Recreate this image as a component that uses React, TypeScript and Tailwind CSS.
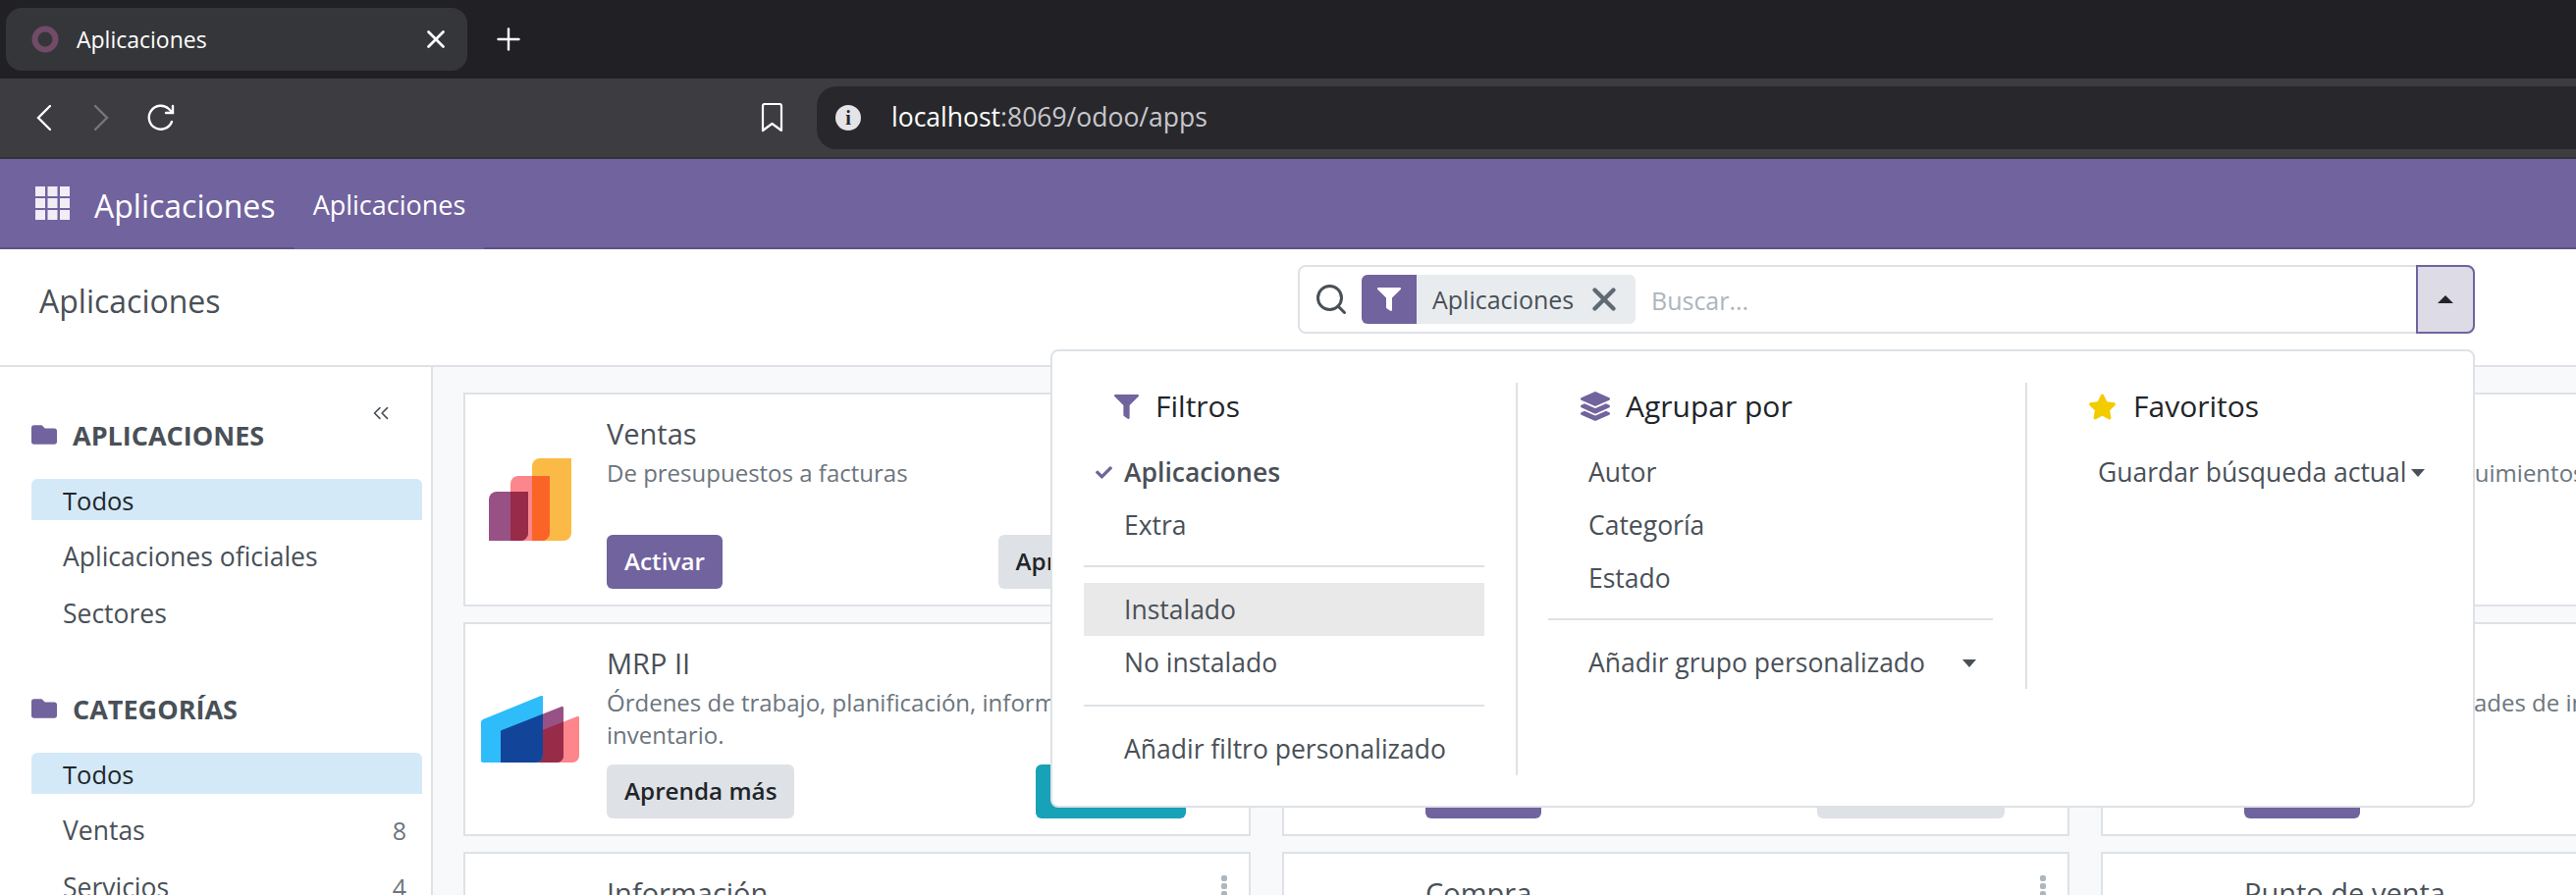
import React from 'react';
import { FaCheck, FaFilter, FaFolder, FaLayerGroup, FaStar } from 'react-icons/fa';
import { ChevronsLeft, Plus, Search, X } from 'lucide-react';

type Card = {
  title: string;
  desc: string;
  left: string;
  right?: string;
  tone?: 'teal' | 'gray';
  logo?: 'ventas' | 'mrp';
};

const cards: Card[] = [
  { title: 'Ventas', desc: 'De presupuestos a facturas', left: 'Activar', right: 'Aprenda más', logo: 'ventas' },
  { title: 'Facturación', desc: 'Facturas y pagos', left: 'Activar', right: 'Aprenda más' },
  { title: 'CRM', desc: 'Facturas, cobro y seguimientos', left: 'Activar', right: 'Aprenda más' },
  {
    title: 'MRP II',
    desc: 'Órdenes de trabajo, planificación, informes de inventario.',
    left: 'Aprenda más',
    right: 'Actualizar',
    tone: 'teal',
    logo: 'mrp',
  },
  { title: 'Inventario', desc: 'Gestione su inventario', left: 'Activar', right: 'Aprenda más' },
  { title: 'Contabilidad', desc: 'Supervisar las actividades de inventario', left: 'Activar', right: 'Aprenda más' },
  { title: 'Información', desc: '', left: 'Activar' },
  { title: 'Compra', desc: '', left: 'Activar' },
  { title: 'Punto de venta', desc: '', left: 'Activar' },
];

const VentasLogo = () => (
  <svg width="84" height="84" viewBox="0 0 84 84">
    <path d="M44 8a8 8 0 0 1 8-8h32v76a8 8 0 0 1-8 8H44z" fill="#fbb945" />
    <path d="M22 26a8 8 0 0 1 8-8h32v58a8 8 0 0 1-8 8H22z" fill="#fc868b" />
    <path d="M44 18h18v58a8 8 0 0 1-8 8H44z" fill="#fa6427" />
    <path d="M0 42a8 8 0 0 1 8-8h32v42a8 8 0 0 1-8 8H0z" fill="#985184" />
    <path d="M22 34h18v42a8 8 0 0 1-8 8H22z" fill="#982b48" />
  </svg>
);

const MrpLogo = () => (
  <svg width="100" height="68" viewBox="0 0 100 68">
    <path d="M40 44 98 21q2-1 2 2v38a7 7 0 0 1-7 7H40z" fill="#fc868b" />
    <path d="M20 35.6 82 11q2-1 2 2v48a7 7 0 0 1-7 7H20z" fill="#985184" />
    <path d="M40 44 84 26.4V61a7 7 0 0 1-7 7H40z" fill="#982b48" />
    <path d="M0 27q0-2 2-3L61 0q2-1 2 2v59a7 7 0 0 1-7 7H2q-2 0-2-2z" fill="#2ebcfa" />
    <path d="M20 35.6 63 18.4V61a7 7 0 0 1-7 7H20z" fill="#124599" />
  </svg>
);

const AppCard = ({ card }: { card: Card }) => (
  <div className="relative flex h-[218px] border-2 border-[#dee2e6] bg-white">
    <div className="flex w-[132px] shrink-0 items-center justify-center">
      {card.logo === 'ventas' && <VentasLogo />}
      {card.logo === 'mrp' && <MrpLogo />}
    </div>
    <div className="ml-3 flex min-w-0 flex-1 flex-col pb-4 pr-16 pt-[23px]">
      <div className="text-[29px] font-medium leading-[33px] text-[#495057]">{card.title}</div>
      <p className="mt-[7px] text-[24px] leading-[33px] text-[#6c757d]">{card.desc}</p>
      <div className="mt-auto flex justify-between">
        <button
          className={`h-[55px] rounded-md px-[18px] text-[24.250px] font-semibold ${card.left === 'Activar' ? 'bg-[#71639e] text-white' : 'bg-[#dee2e6] text-[#212529]'}`}
        >
          {card.left}
        </button>
        {card.right && (
          <button
            className={`h-[55px] rounded-md px-[18px] text-[24.250px] font-semibold ${card.tone === 'teal' ? 'w-[153px] bg-[#17a2b8] text-white' : 'bg-[#dee2e6] text-[#212529]'}`}
          >
            {card.right}
          </button>
        )}
      </div>
    </div>
    <div className="absolute right-[22px] top-[22px] flex flex-col gap-[2px]">
      <span className="h-[6px] w-[6px] rounded-[2px] bg-[#adb5bd]" />
      <span className="h-[6px] w-[6px] rounded-[2px] bg-[#adb5bd]" />
      <span className="h-[6px] w-[6px] rounded-[2px] bg-[#adb5bd]" />
    </div>
  </div>
);

const SideHeader = ({ label }: { label: string }) => (
  <div className="flex h-[42px] items-center gap-4 text-[#71639e]">
    <FaFolder className="h-[26px] w-[26px]" />
    <span className="pt-[2px] text-[27px] font-bold text-[#495057]">{label}</span>
  </div>
);

const SideRow = ({ label, count, active }: { label: string; count?: number; active?: boolean }) => (
  <div
    className={`flex h-[42px] items-center justify-between rounded-t-md pl-8 pr-4 pt-[2px] ${active ? 'bg-[#d4e9f8] text-[25.500px] font-medium text-[#212529]' : 'text-[26.500px] text-[#495057]'}`}
  >
    <span>{label}</span>
    {count !== undefined && <span className="text-[25px] text-[#6c757d]">{count}</span>}
  </div>
);

const MenuRow = ({ children, active, strong }: { children: React.ReactNode; active?: boolean; strong?: boolean }) => (
  <div
    className={`relative flex h-[54px] items-center justify-between pl-[41px] pr-[17px] pt-[2px] text-[26.500px] text-[#495057] ${active ? 'bg-[#e9e9e9]' : ''} ${strong ? 'font-semibold' : ''}`}
  >
    {children}
  </div>
);

const Caret = () => <span className="h-0 w-0 border-x-[7px] border-t-[8px] border-x-transparent border-t-[#495057]" />;

const Heading = ({ icon, label, gap }: { icon: React.ReactNode; label: string; gap: string }) => (
  <div className={`mb-4 flex h-[48px] items-center pl-[31px] text-[30px] font-medium text-[#212529] ${gap}`}>
    {icon}
    <span className="pb-[2px]">{label}</span>
  </div>
);

const SearchDropdown = () => (
  <div className="absolute left-[1070px] top-[356px] flex h-[467px] w-[1451px] items-start rounded-lg border-2 border-[#dee2e6] bg-white pt-8">
    <div className="h-[400px] w-[474px] border-r-2 border-[#dee2e6] pl-[32px] pr-[32px]">
      <Heading gap="gap-[17px]" icon={<FaFilter className="h-[25px] w-[25px] text-[#71639e]" />} label="Filtros" />
      <MenuRow strong>
        <FaCheck className="absolute left-3 top-[19px] h-[17px] w-[17px] text-[#71639e]" />
        Aplicaciones
      </MenuRow>
      <MenuRow>Extra</MenuRow>
      <div className="mb-4 mt-[14px] h-[2px] bg-[#dee2e6]" />
      <MenuRow active>Instalado</MenuRow>
      <MenuRow>No instalado</MenuRow>
      <div className="my-4 h-[2px] bg-[#dee2e6]" />
      <MenuRow>Añadir filtro personalizado</MenuRow>
    </div>
    <div className="h-[312px] w-[519px] border-r-2 border-[#dee2e6] pl-[31px] pr-[33px]">
      <div className="pl-[2px]">
        <Heading gap="gap-[16px]" icon={<FaLayerGroup className="h-[30px] w-[30px] text-[#71639e]" />} label="Agrupar por" />
      </div>
      <MenuRow>Autor</MenuRow>
      <MenuRow>Categoría</MenuRow>
      <MenuRow>Estado</MenuRow>
      <div className="mb-4 mt-[14px] h-[2px] bg-[#dee2e6]" />
      <MenuRow>
        Añadir grupo personalizado
        <Caret />
      </MenuRow>
    </div>
    <div className="flex-1 pl-[31px]">
      <Heading gap="gap-[17px]" icon={<FaStar className="h-[29px] w-[29px] text-[#f3cc00]" />} label="Favoritos" />
      <MenuRow>
        <span className="flex items-center gap-1">
          Guardar búsqueda actual
          <Caret />
        </span>
      </MenuRow>
    </div>
  </div>
);

const App: React.FC = () => {
  return (
    <div className="relative flex h-[912px] w-[2624px] flex-col overflow-hidden bg-white font-['Open_Sans',sans-serif]">
      {/* tab strip */}
      <div className="flex h-[80px] shrink-0 items-center bg-[#202025] pl-[6px]">
        <div className="flex h-16 w-[470px] items-center rounded-2xl bg-[#35363a] pl-[26px] pr-[17px] text-[23px] text-white">
          <svg width="28" height="28" viewBox="0 0 28 28" fill="none">
            <circle cx="14" cy="14" r="10.500" stroke="#714b67" strokeWidth="6" />
          </svg>
          <span className="ml-[18px] flex-1">Aplicaciones</span>
          <X className="h-[30px] w-[30px]" strokeWidth={2.2} />
        </div>
        <Plus className="ml-6 h-9 w-9 text-white" strokeWidth={1.6} />
      </div>

      {/* toolbar */}
      <div className="flex h-[82px] shrink-0 items-start border-b-2 border-[#333338] bg-[#3c3c41] pt-2">
        <div className="flex h-16 w-[832px] shrink-0 items-center pl-[37px]">
          <svg width="15" height="26" viewBox="0 0 15 26" fill="none" stroke="#ffffff" strokeWidth="2.4" strokeLinecap="round">
            <path d="M14 1 2 13l12 12" />
          </svg>
          <svg className="ml-[44px]" width="15" height="26" viewBox="0 0 15 26" fill="none" stroke="#77777b" strokeWidth="2.4" strokeLinecap="round">
            <path d="m1 1 12 12L1 25" />
          </svg>
          <svg className="ml-[38px]" width="30" height="30" viewBox="0 0 30 30" fill="none" stroke="#ffffff" strokeWidth="2.4" strokeLinecap="round">
            <path d="M26 19a12 12 0 1 1-3-13l4 4" />
            <path d="M27 3v7h-7" />
          </svg>
          <svg className="ml-auto mr-[34px]" width="23" height="30" viewBox="0 0 23 30" fill="none" stroke="#ffffff" strokeWidth="2.2" strokeLinejoin="round">
            <path d="M2 3q0-2 2-2h15q2 0 2 2v25l-9.500-7L2 28z" />
          </svg>
        </div>
        <div className="flex h-16 flex-1 items-center rounded-l-[20px] bg-[#28282c] pl-[19px] text-[26.500px]">
          <span className="flex h-[26px] w-[26px] items-center justify-center rounded-full bg-[#e3e3e8] font-['Liberation_Serif',serif] text-[20px] font-bold text-[#28282c]">
            i
          </span>
          <span className="ml-[31px] text-white">localhost</span>
          <span className="text-[#c7c7cc]">:8069/odoo/apps</span>
        </div>
      </div>

      {/* odoo navbar */}
      <div className="flex h-[92px] shrink-0 bg-[#71639e] text-white">
        <div className="flex w-[300px] items-center border-b-2 border-[#5f5285] pl-9">
          <svg width="35" height="34" viewBox="0 0 35 34" fill="#f1edf6">
            <rect x="0" y="0" width="10" height="10" />
            <rect x="12.500" y="0" width="10" height="10" />
            <rect x="25" y="0" width="10" height="10" />
            <rect x="0" y="12" width="10" height="10" />
            <rect x="12.500" y="12" width="10" height="10" />
            <rect x="25" y="12" width="10" height="10" />
            <rect x="0" y="24" width="10" height="10" />
            <rect x="12.500" y="24" width="10" height="10" />
            <rect x="25" y="24" width="10" height="10" />
          </svg>
          <span className="ml-[25px] pt-[5px] text-[32px]">Aplicaciones</span>
        </div>
        <div className="flex w-[193px] items-center justify-center pt-[3px] text-[27px]">Aplicaciones</div>
        <div className="flex-1 border-b-2 border-[#5f5285]" />
      </div>

      {/* control panel */}
      <div className="flex h-[120px] shrink-0 items-start border-b-2 border-[#dee2e6] pl-10 pt-4">
        <div className="flex h-[70px] w-[1282px] items-center pt-[3px] text-[32px] text-[#495057]">Aplicaciones</div>
        <div className="flex h-[70px] w-[1199px] items-stretch rounded-lg border-2 border-[#dee2e6]">
          <div className="flex flex-1 items-center pl-[14px]">
            <Search className="h-9 w-9 text-[#495057]" strokeWidth={2} />
            <div className="ml-[13px] flex h-[50px] w-[279px] items-center rounded-md bg-[#e9ecef]">
              <span className="flex h-full w-[56px] items-center justify-center rounded-l-md bg-[#71639e]">
                <FaFilter className="h-[24px] w-[24px] text-white" />
              </span>
              <span className="ml-4 flex-1 pt-[2px] text-[25px] text-[#495057]">Aplicaciones</span>
              <X className="mr-[13px] h-[38px] w-[38px] text-[#5f6a72]" strokeWidth={2.8} />
            </div>
            <span className="ml-4 pt-[3px] text-[25px] text-[#adb5bd]">Buscar...</span>
          </div>
          <div className="-m-[2px] flex w-[60px] items-center justify-center rounded-r-lg border-2 border-[#71639e] bg-[#dddbe6]">
            <span className="h-0 w-0 border-x-[8px] border-b-[8px] border-x-transparent border-b-[#212529]" />
          </div>
        </div>
      </div>

      <div className="flex min-h-0 flex-1">
        <aside className="w-[441px] shrink-0 overflow-hidden border-r-2 border-[#dee2e6] bg-white pl-8 pr-[9px] pt-[48px]">
          <div className="relative">
            <ChevronsLeft className="absolute left-[343px] top-[-14px] h-[26px] w-[26px] text-[#495057]" strokeWidth={1.5} />
            <SideHeader label="APLICACIONES" />
          </div>
          <div className="mt-6 flex flex-col gap-4">
            <SideRow label="Todos" active />
            <SideRow label="Aplicaciones oficiales" />
            <SideRow label="Sectores" />
          </div>
          <div className="mt-[55px]">
            <SideHeader label="CATEGORÍAS" />
          </div>
          <div className="mt-6 flex flex-col gap-4">
            <SideRow label="Todos" active />
            <SideRow label="Ventas" count={8} />
            <SideRow label="Servicios" count={4} />
          </div>
        </aside>
        <main className="min-w-0 flex-1 overflow-hidden bg-[#f8f9fa] pl-[31px] pt-[26px]">
          <div className="grid grid-cols-[repeat(3,802px)] gap-x-8 gap-y-4">
            {cards.map((card) => (
              <AppCard key={card.title} card={card} />
            ))}
          </div>
        </main>
      </div>

      <SearchDropdown />
    </div>
  );
};

export default App;
